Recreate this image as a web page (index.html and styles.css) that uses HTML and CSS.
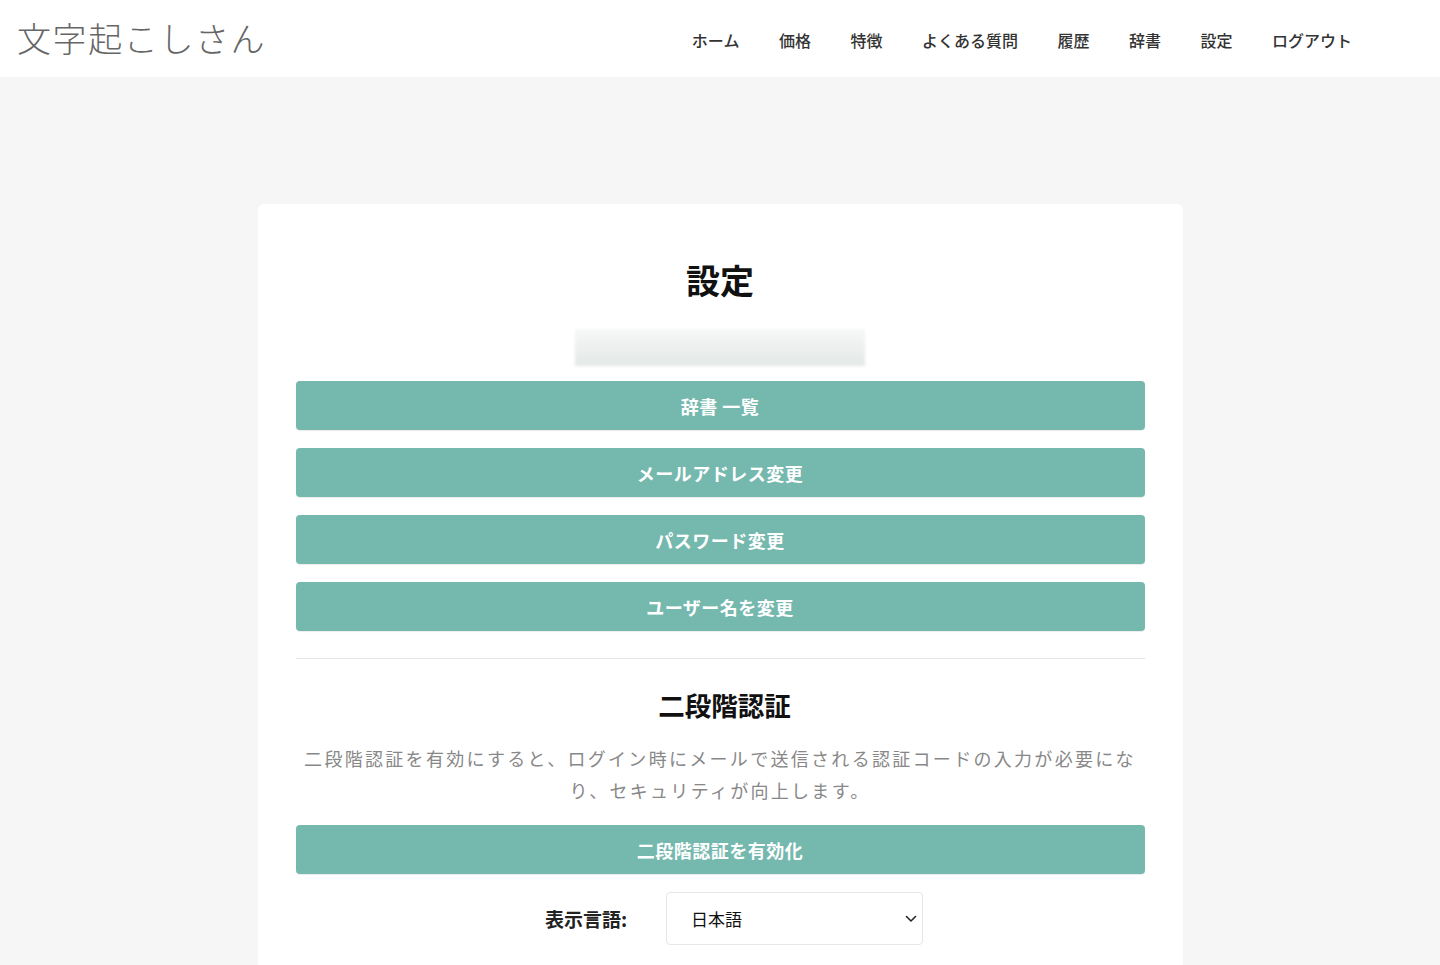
FILE: index.html
```html
<!DOCTYPE html>
<html lang="ja">
<head>
    <meta charset="UTF-8">
    <meta name="viewport" content="width=device-width, initial-scale=1.0">
    <title>設定 - 文字起こしさん</title>
    <link rel="stylesheet" href="styles.css">
</head>
<body>

    <header class="header">
        <a class="logo" href="#">文字起こしさん</a>
        <nav class="nav">
            <a href="#">ホーム</a>
            <a href="#">価格</a>
            <a href="#">特徴</a>
            <a href="#">よくある質問</a>
            <a href="#">履歴</a>
            <a href="#">辞書</a>
            <a href="#">設定</a>
            <a href="#">ログアウト</a>
        </nav>
    </header>

    <main class="main">
        <div class="card">
            <h1 class="title">設定</h1>

            <div class="email-blur"></div>

            <div class="actions">
                <button class="btn">辞書 一覧</button>
                <button class="btn">メールアドレス変更</button>
                <button class="btn">パスワード変更</button>
                <button class="btn">ユーザー名を変更</button>
            </div>

            <hr class="divider">

            <h2 class="subtitle">二段階認証</h2>
            <p class="desc">二段階認証を有効にすると、ログイン時にメールで送信される認証コードの入力が必要になり、セキュリティが向上します。</p>
            <button class="btn">二段階認証を有効化</button>

            <div class="lang-row">
                <label class="lang-label" for="lang">表示言語:</label>
                <div class="select-wrap">
                    <select id="lang" class="lang-select">
                        <option>日本語</option>
                        <option>English</option>
                    </select>
                    <svg class="chevron" width="12" height="8" viewBox="0 0 12 8">
                        <path d="M1.5 1.5 L6 6 L10.5 1.5" fill="none" stroke="#222" stroke-width="1.5" stroke-linecap="round" stroke-linejoin="round"/>
                    </svg>
                </div>
            </div>
        </div>
    </main>

</body>
</html>
```

FILE: styles.css
```css
body {
    font-family: "Noto Sans CJK JP", "Noto Sans", sans-serif;
    background-color: #f6f6f6;
    margin: 0;
    color: #222;
}

.header {
    background: white;
    height: 77px;
    display: flex;
    align-items: center;
    justify-content: space-between;
    padding: 0 88px 0 17px;
}

.logo {
    font-size: 34px;
    font-weight: 300;
    letter-spacing: 1.6px;
    color: #666;
    text-decoration: none;
    margin-top: -2px;
}

.nav {
    display: flex;
    gap: 39.5px;
    margin-top: 2px;
}

.nav a {
    font-size: 16px;
    font-weight: 500;
    color: #333;
    text-decoration: none;
}

.main {
    padding-top: 127px;
}

.card {
    width: 849px;
    margin: 0 auto;
    background: white;
    border-radius: 6px;
    padding: 38px 38px 60px;
    text-align: center;
}

.title {
    font-size: 34px;
    line-height: 48px;
    font-weight: 700;
    margin: 14px 0 0;
    color: #111;
}

.email-blur {
    width: 290px;
    height: 37px;
    margin: 25px auto 15px;
    background: linear-gradient(to bottom, #f6f7f7, #e4e8e7);
    filter: blur(1.5px);
}

.actions {
    display: flex;
    flex-direction: column;
    gap: 18px;
}

.btn {
    display: block;
    width: 100%;
    height: 49px;
    background-color: #75b8ae;
    color: white;
    border: none;
    border-radius: 4px;
    font-family: inherit;
    font-size: 18px;
    font-weight: 700;
    letter-spacing: 0.5px;
    cursor: pointer;
    box-shadow: 0 1px 1px rgba(0, 0, 0, 0.08);
}

.btn:hover {
    background-color: #67aba1;
}

.divider {
    border: none;
    border-top: 1px solid #e4e4e4;
    margin: 27px 0 0;
}

.subtitle {
    font-size: 26.5px;
    line-height: 36px;
    font-weight: 700;
    margin: 28px 0 0;
    padding-left: 9px;
    color: #111;
}

.desc {
    font-size: 18px;
    line-height: 32px;
    letter-spacing: 2.3px;
    color: #888;
    margin: 19px 0 19px;
}

.lang-row {
    display: flex;
    justify-content: center;
    align-items: center;
    gap: 39px;
    margin-top: 18px;
    padding-left: 28px;
}

.lang-label {
    font-size: 19px;
    font-weight: 700;
    color: #222;
}

.select-wrap {
    position: relative;
}

.lang-select {
    appearance: none;
    -webkit-appearance: none;
    width: 257px;
    height: 53px;
    padding: 0 24px;
    font-family: inherit;
    font-size: 17px;
    color: #111;
    background: white;
    border: 1px solid #e6e6e6;
    border-radius: 4px;
}

.chevron {
    position: absolute;
    right: 6px;
    top: 23px;
    pointer-events: none;
}
```
